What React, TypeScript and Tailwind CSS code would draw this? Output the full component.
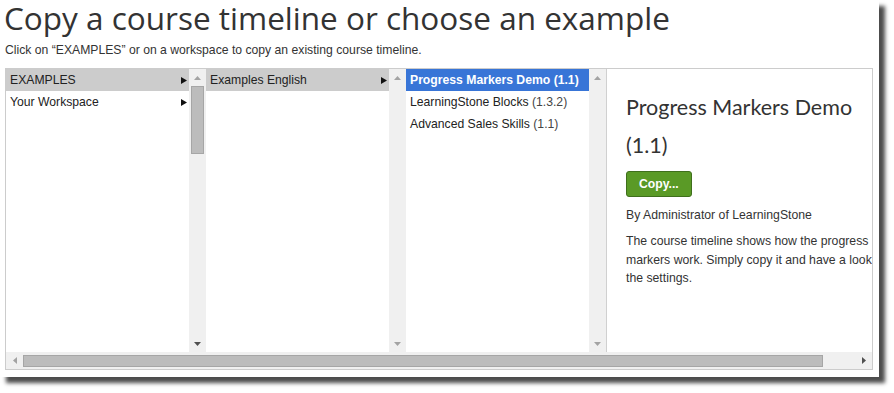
import React from "react";

const ui = { fontFamily: '"Liberation Sans", Arial, sans-serif' };

type Tri = "up" | "down" | "left" | "right";

const Arrow = ({ dir, dark }: { dir: Tri; dark?: boolean }) => {
  const pts: Record<Tri, string> = {
    up: "0,4 3.5,0 7,4",
    down: "0,0 7,0 3.5,4",
    left: "4,0 4,7 0,3.5",
    right: "0,0 4,3.5 0,7",
  };
  const vertical = dir === "up" || dir === "down";
  return (
    <svg width={vertical ? 7 : 4} height={vertical ? 4 : 7} viewBox={vertical ? "0 0 7 4" : "0 0 4 7"}>
      <polygon points={pts[dir]} fill={dark ? "#505050" : "#a3a3a3"} />
    </svg>
  );
};

const VScroll = ({ thumb }: { thumb?: boolean }) => (
  <div className="flex w-[17px] shrink-0 flex-col bg-[#f0f0f0]">
    <div className="flex h-[17px] items-center justify-center">
      <Arrow dir="up" />
    </div>
    <div className="flex-1 px-[2px]">
      {thumb && <div className="h-[68px] border border-[#a6a6a6] bg-[#bcbcbc]" />}
    </div>
    <div className="flex h-[17px] items-center justify-center">
      <Arrow dir="down" dark={thumb} />
    </div>
  </div>
);

const Pointer = () => (
  <svg width="6" height="7" viewBox="0 0 6 7">
    <polygon points="0,0 6,3.5 0,7" fill="#111" />
  </svg>
);

type Item = { name: string; version?: string; selected?: boolean; active?: boolean; more?: boolean };

const columns: Item[][] = [
  [
    { name: "EXAMPLES", more: true, selected: true },
    { name: "Your Workspace", more: true },
  ],
  [{ name: "Examples English", more: true, selected: true }],
  [
    { name: "Progress Markers Demo", version: "(1.1)", active: true },
    { name: "LearningStone Blocks", version: "(1.3.2)" },
    { name: "Advanced Sales Skills", version: "(1.1)" },
  ],
];

const Column = ({ items, thumb }: { items: Item[]; thumb?: boolean }) => (
  <div className="flex w-[200px] shrink-0">
    <div className="w-[183px]">
      {items.map((it) => (
        <div
          key={it.name}
          className={`flex h-[22px] items-center justify-between pl-[4px] pr-[2px] text-[12.2px] ${
            it.active ? "bg-[#3875d7] font-bold text-white" : it.selected ? "bg-[#cccccc] text-[#222]" : "text-[#222]"
          }`}
        >
          <span className="whitespace-nowrap">
            {it.name}
            {it.version && <span className={it.active ? "" : "text-[#444]"}> {it.version}</span>}
          </span>
          {it.more && <Pointer />}
        </div>
      ))}
    </div>
    <VScroll thumb={thumb} />
  </div>
);

export default function App() {
  return (
    <div className="min-h-[393px] bg-white pb-[16px]" style={ui}>
      <div className="h-[377px] w-[879px] bg-white shadow-[6px_6px_4px_rgba(0,0,0,0.7)]">
        <h1
          className="pl-[4px] text-[31.5px] leading-[36px] text-[#333]"
          style={{ fontFamily: '"Open Sans", sans-serif' }}
        >
          Copy a course timeline or choose an example
        </h1>
        <p className="mt-[7px] pl-[5px] text-[12.2px] leading-[15px] text-[#333]">
          Click on “EXAMPLES” or on a workspace to copy an existing course timeline.
        </p>
        <div className="ml-[5px] mt-[10px] flex h-[302px] w-[868px] flex-col border border-[#cccccc]">
          <div className="flex flex-1 overflow-hidden">
            <Column items={columns[0]} thumb />
            <Column items={columns[1]} />
            <Column items={columns[2]} />
            <div className="flex-1 overflow-hidden border-l border-[#d0d0d0]">
              <div className="w-[290px] pl-[19px] pt-[19px]">
                <h2
                  className="w-[236px] text-[21.5px] leading-[38px] text-[#333]"
                  style={{ fontFamily: "Lato, sans-serif" }}
                >
                  Progress Markers Demo (1.1)
                </h2>
                <button className="mt-[7px] h-[26px] rounded-[3px] border border-[#3f6f1c] bg-[#5a9a26] px-[12px] text-[12.2px] font-bold text-white">
                  Copy...
                </button>
                <p className="mt-[10px] text-[12.25px] leading-[16px] text-[#333]">By Administrator of LearningStone</p>
                <p className="mt-[9px] w-[270px] text-[12.25px] leading-[18.5px] text-[#333]">
                  The course timeline shows how the progress markers work. Simply copy it and have a look at the
                  settings.
                </p>
              </div>
            </div>
          </div>
          <div className="flex h-[17px] items-center bg-[#f0f0f0]">
            <div className="flex w-[17px] justify-center">
              <Arrow dir="left" />
            </div>
            <div className="flex-1 pr-[32px]">
              <div className="h-[12px] border border-[#a6a6a6] bg-[#bcbcbc]" />
            </div>
            <div className="flex w-[17px] justify-center">
              <Arrow dir="right" dark />
            </div>
          </div>
        </div>
      </div>
    </div>
  );
}
